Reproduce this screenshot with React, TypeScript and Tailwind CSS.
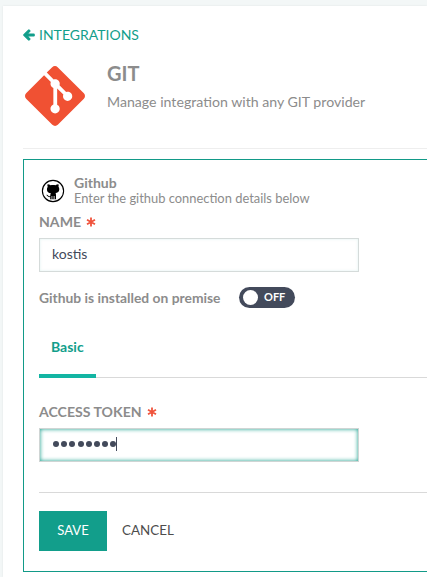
import type { ReactNode } from "react";
import { FaArrowLeft } from "react-icons/fa";

function GitLogo() {
  return (
    <svg viewBox="0 0 24 24" className="h-[60px] w-[60px] shrink-0" fill="#f05133">
      <path d="M23.546 10.93L13.067.452c-.604-.603-1.582-.603-2.188 0L8.708 2.627l2.76 2.76c.645-.215 1.379-.07 1.889.441.516.515.658 1.258.438 1.9l2.658 2.66c.645-.223 1.387-.078 1.9.435.721.72.721 1.884 0 2.604-.719.719-1.881.719-2.6 0-.539-.541-.674-1.337-.404-1.996L12.86 8.955v6.525c.176.086.342.203.488.348.713.721.713 1.883 0 2.6-.719.721-1.889.721-2.609 0-.719-.719-.719-1.879 0-2.598.182-.18.387-.316.605-.406V8.835c-.217-.091-.424-.222-.6-.401-.545-.545-.676-1.342-.396-2.009L7.636 3.7.45 10.881c-.6.605-.6 1.584 0 2.189l10.48 10.477c.604.604 1.582.604 2.186 0l10.43-10.43c.605-.603.605-1.582 0-2.187" />
    </svg>
  );
}

function GithubBadge() {
  return (
    <svg viewBox="0 0 24 24" className="h-6 w-6 shrink-0">
      <circle cx="12" cy="12" r="10.6" fill="#fff" stroke="#000" strokeWidth="1.1" />
      <path d="M6.600 5.200c1-.1 2 .5 2.900 1.100 1.700-.4 3.400-.4 5 0 .9-.6 1.900-1.200 2.900-1.100.4.900.4 1.800.1 2.600 1.200 1.500 1 4.200-.3 5.300-.8.700-1.700.9-2.700 1 .4.500.5 1.100.5 1.800v3.600c0 .3.200.5.400.7H8.800c.3-.2.400-.4.400-.7v-1.400c-1.400.3-2.300-.1-2.800-1-.3-.6-.6-1-1.100-1.200.9-.4 1.600.2 2 .8.500.7 1.100.8 1.900.5 0-1.200.2-2.200.7-2.900-1.100-.1-2-.4-2.800-1-1.300-1.100-1.600-3.700-.4-5.500-.4-.8-.5-1.700-.1-2.600z" />
      <path d="M10.700 17v3.500M12.100 17v3.500M13.500 17v3.500" stroke="#fff" strokeWidth=".5" />
    </svg>
  );
}

function Asterisk() {
  return (
    <svg viewBox="0 0 10 10" className="-mt-px h-[10px] w-[10px]" stroke="#f0533c" strokeWidth="1.800">
      <path d="M5 .5v9M1 2.700l8 4.600M1 7.300l8-4.600" />
    </svg>
  );
}

function Label({ children }: { children: ReactNode }) {
  return (
    <div className="flex h-5 items-center gap-[5px] text-[14.1px] font-bold leading-5 text-[#8c8c8c]">
      <span>{children}</span>
      <Asterisk />
    </div>
  );
}

export default function App() {
  return (
    <div className="h-[577px] w-[427px] overflow-hidden bg-[#f3f7f7] pl-[3px] pt-[6px] font-['Lato',sans-serif] text-[14px] text-[#8c8c8c]">
      <main className="h-[571px] bg-white pl-5 pt-[19px] shadow-[0_0_2px_rgba(0,0,0,0.08)]">
        <a className="flex h-5 items-center gap-[4px] leading-5 text-[#129e8b]">
          <FaArrowLeft className="h-[12px] w-[12px]" stroke="currentColor" strokeWidth={48} />
          <span className="text-[14px]">INTEGRATIONS</span>
        </a>

        <header className="flex h-[104px] border-b border-[#eeeeee] pl-[2px] pt-[21px]">
          <GitLogo />
          <div className="ml-[22px] -mt-[5px]">
            <h1 className="text-[20px] font-bold leading-[24px]">GIT</h1>
            <p className="mt-[7px] text-[14.15px] leading-5">Manage integration with any GIT provider</p>
          </div>
        </header>

        <section className="mt-[10px] h-[413px] border border-r-0 border-[#129a88] pl-[15px] pt-[15px]">
          <div className="flex h-[31px] items-center pl-[2px]">
            <GithubBadge />
            <div className="ml-[9px]">
              <div className="text-[14px] font-bold leading-[15px]">Github</div>
              <div className="text-[12.9px] leading-[16px]">Enter the github connection details below</div>
            </div>
          </div>

          <div className="mt-[6px]"><Label>NAME</Label></div>
          <div className="mt-[6px] flex h-[34px] w-[320px] items-center border border-[#d5dbda] px-3 pb-[3px] text-[#434a5b] shadow-[inset_0_0_3px_rgba(18,154,136,0.12)]">
            kostis
          </div>

          <div className="mt-[15px] flex h-[21px] items-center">
            <span className="w-[200px] text-[13.85px] font-bold leading-[21px]">Github is installed on premise</span>
            <div className="flex h-[21px] w-[56px] items-center rounded-full bg-[#434a5b] pl-1 text-[11px] font-bold text-white">
              <span className="h-[15px] w-[15px] rounded-full bg-white" />
              <span className="ml-[6px]">OFF</span>
            </div>
          </div>

          <nav className="mt-[19px] h-[51px] border-b border-[#d9d9d9]">
            <div className="h-[51px] w-[57px] border-b-4 border-[#13b5a3] pl-3 pt-[10px] font-bold leading-5 text-[#129e8b]">
              Basic
            </div>
          </nav>

          <div className="mt-[24px]"><Label>ACCESS TOKEN</Label></div>
          <div className="mt-[6px] flex h-[34px] w-[320px] items-center border border-[#cfd5d4] px-[13px] pb-[2px] shadow-[inset_0_0_4px_#129e8b]">
            <div className="flex gap-[2.200px]">
              {Array.from({ length: 8 }, (_, i) => (
                <span key={i} className="h-[6px] w-[6px] rounded-full bg-[#434a5b]" />
              ))}
            </div>
            <span className="h-[14px] w-px bg-[#434a5b]" />
          </div>

          <footer className="mt-[30px] flex items-center border-t border-[#d9d9d9] pt-[18px]">
            <button className="h-10 w-[68px] bg-[#129e8b] pb-px text-[13.1px] text-white">SAVE</button>
            <button className="ml-[15px] pb-px text-[13.4px] text-[#4d4d4d]">CANCEL</button>
          </footer>
        </section>
      </main>
    </div>
  );
}
